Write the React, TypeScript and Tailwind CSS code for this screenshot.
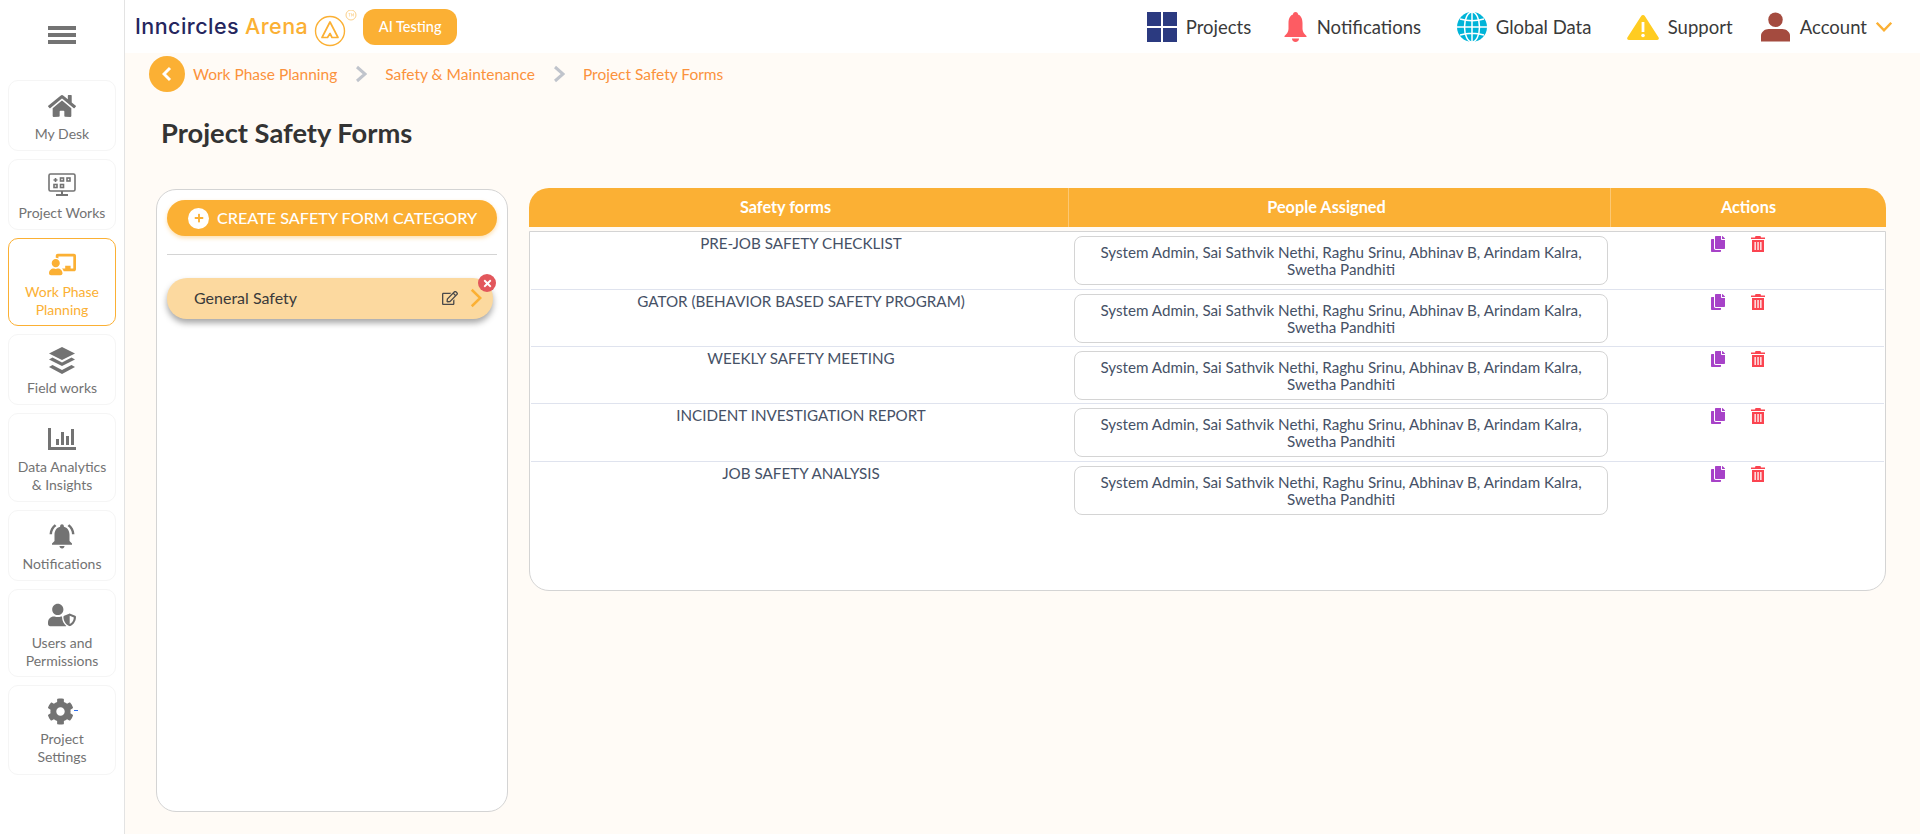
import React from "react";
import { FaHome, FaChalkboardTeacher, FaUserShield, FaCog, FaRegEdit, FaTimes, FaCopy, FaPlus } from "react-icons/fa";
import { MdNotificationsActive } from "react-icons/md";

const Grey = "#737373";

function Chevron({ w, h, color, sw, dir = "right", className }: { w: number; h: number; color: string; sw: number; dir?: "right" | "left" | "down"; className?: string }) {
  const p = sw / 2 + 0.5;
  const d =
    dir === "right"
      ? `M${p} ${p}L${w - p} ${h / 2}L${p} ${h - p}`
      : dir === "left"
        ? `M${w - p} ${p}L${p} ${h / 2}L${w - p} ${h - p}`
        : `M${p} ${p}L${w / 2} ${h - p}L${w - p} ${p}`;
  return (
    <svg width={w} height={h} viewBox={`0 0 ${w} ${h}`} fill="none" className={className}>
      <path d={d} stroke={color} strokeWidth={sw} />
    </svg>
  );
}
function ProjectWorksIcon() {
  return (
    <svg width="28" height="24" viewBox="0 0 28 24" fill="none" stroke={Grey} strokeWidth="1.6">
      <rect x="1" y="1" width="26" height="17" rx="1.5" />
      <path d="M14 18v3M8 22h12" strokeWidth="2" />
      <path d="M5.500 7h4M7.500 5v4" />
      <rect x="12.500" y="5" width="3" height="3" />
      <rect x="19" y="5" width="3" height="3" />
      <rect x="6" y="11.500" width="3" height="3" />
      <rect x="12.500" y="11.500" width="3" height="3" />
    </svg>
  );
}
function LayersIcon() {
  return (
    <svg width="26" height="27" viewBox="0 0 26 27" fill={Grey}>
      <path d="M13 0 26 6.500 13 13 0 6.500z" />
      <path d="M3.500 10.500 13 15.500l9.500-5 3.500 2-13 6.500L0 12.500z" />
      <path d="M3.500 18 13 23l9.500-5 3.500 2L13 27 0 20z" />
    </svg>
  );
}
function ChartIcon() {
  return (
    <svg width="28" height="22" viewBox="0 0 28 22" fill={Grey}>
      <path d="M0 0h3v19h25v3H0z" />
      <rect x="8" y="11" width="3" height="6" />
      <rect x="13" y="4" width="3" height="13" />
      <rect x="18" y="8" width="3" height="9" />
      <rect x="23" y="1" width="3" height="16" />
    </svg>
  );
}
function TrashIcon() {
  return (
    <svg width="14" height="16" viewBox="0 0 14 16" fill="#fb4450">
      <path d="M4.500 0h5l.5 1.500h4V3H0V1.500h4z" />
      <path fillRule="evenodd" d="M1 4h12v12H1zM3.500 6v8h1.300V6zM6.400 6v8h1.300V6zM9.200 6v8h1.300V6z" />
    </svg>
  );
}
function WindowsIcon() {
  return (
    <svg width="30" height="30" viewBox="0 0 30 30" fill="#2b3a80">
      <rect width="14" height="14" />
      <rect x="16" width="14" height="14" />
      <rect y="16" width="14" height="14" />
      <rect x="16" y="16" width="14" height="14" />
    </svg>
  );
}
function BellIcon() {
  return (
    <svg width="25" height="30" viewBox="0 0 24 30" fill="#fd5c63">
      <circle cx="12" cy="2.500" r="2.500" />
      <path d="M12 2c5 0 7 4 7 9v6c0 3 2 5 4 7v1H1v-1c2-2 4-4 4-7v-6c0-5 2-9 7-9z" />
      <path d="M8.500 26.500h7c0 2-1.500 3.500-3.500 3.500s-3.500-1.500-3.500-3.500z" />
    </svg>
  );
}
function GlobeIcon() {
  return (
    <svg width="30" height="30" viewBox="0 0 30 30" fill="none">
      <circle cx="15" cy="15" r="15" fill="#00b4d8" />
      <path d="M15 0v30M0 15h30M3 7c7 2 17 2 24 0M3 23c7-2 17-2 24 0" stroke="#fff" strokeWidth="1.500" />
      <ellipse cx="15" cy="15" rx="7.500" ry="15" stroke="#fff" strokeWidth="1.500" />
    </svg>
  );
}
function WarningIcon() {
  return (
    <svg width="32" height="26" viewBox="0 0 32 26">
      <path d="M16 1c.8 0 1.400.4 1.800 1.100l13.800 21.300c.7 1.100 0 2.600-1.400 2.600H1.800C.4 26-.3 24.500.4 23.400L14.200 2.100C14.600 1.400 15.200 1 16 1z" fill="#ffcc21" />
      <rect x="14.600" y="8" width="2.800" height="10" fill="#fff" />
      <circle cx="16" cy="21.500" r="1.800" fill="#fff" />
    </svg>
  );
}
function UserIcon() {
  return (
    <svg width="29" height="30" viewBox="0 0 30 30" fill="#a44b3f">
      <ellipse cx="15" cy="7.500" rx="7.500" ry="7.500" />
      <path d="M0 30v-6c0-4 4-7 8-7h14c4 0 8 3 8 7v6z" />
    </svg>
  );
}
function LogoMark() {
  return (
    <svg width="44" height="38" viewBox="0 0 44 38" fill="none" className="ml-[6px] mt-[4px]">
      <circle cx="16" cy="21" r="14.500" stroke="#fbb034" strokeWidth="1.400" />
      <path d="M8 27.500 16 12l8 15.500h-6l-2-4-2.500 4z" stroke="#fbb034" strokeWidth="1.700" strokeLinejoin="round" />
      <circle cx="37" cy="5" r="5" stroke="#fbd08a" strokeWidth="1" />
      <path d="M34.500 3.500h2M35.500 3.500v3M37.500 6.500v-3l1 2 1-2v3" stroke="#fbd08a" strokeWidth=".6" />
    </svg>
  );
}
function GearIcon() {
  return (
    <div className="flex items-center">
      <FaCog size={27} color={Grey} />
      <span className="mb-[2px] h-px w-[4px] bg-[#2f6fed]" />
    </div>
  );
}

const nav = [
  { label: ["My Desk"], icon: <FaHome size={28} color={Grey} />, h: "h-[71px]" },
  { label: ["Project Works"], icon: <ProjectWorksIcon />, h: "h-[71px]" },
  { label: ["Work Phase", "Planning"], icon: <FaChalkboardTeacher size={27} color="#fbb034" />, h: "h-[88px]", active: true },
  { label: ["Field works"], icon: <LayersIcon />, h: "h-[71px]" },
  { label: ["Data Analytics", "& Insights"], icon: <ChartIcon />, h: "h-[89px]" },
  { label: ["Notifications"], icon: <MdNotificationsActive size={30} color={Grey} />, h: "h-[71px]" },
  { label: ["Users and", "Permissions"], icon: <FaUserShield size={28} color={Grey} />, h: "h-[88px]" },
  { label: ["Project", "Settings"], icon: <GearIcon />, h: "h-[90px]" },
];

const topItems = [
  { icon: <WindowsIcon />, label: "Projects", w: "w-[136px]" },
  { icon: <BellIcon />, label: "Notifications", w: "w-[174px]" },
  { icon: <GlobeIcon />, label: "Global Data", w: "w-[170px]" },
  { icon: <WarningIcon />, label: "Support", w: "w-[134px]" },
];

const forms = [
  { name: "PRE-JOB SAFETY CHECKLIST", h: "h-[58px]" },
  { name: "GATOR (BEHAVIOR BASED SAFETY PROGRAM)", h: "h-[57px]" },
  { name: "WEEKLY SAFETY MEETING", h: "h-[57px]" },
  { name: "INCIDENT INVESTIGATION REPORT", h: "h-[58px]" },
  { name: "JOB SAFETY ANALYSIS", h: "h-[57px]" },
];

export default function App() {
  return (
    <div className="flex h-[834px] w-[1920px] overflow-hidden bg-[#fffbf6] font-['Lato',sans-serif]">
      <aside className="flex w-[125px] shrink-0 flex-col items-center border-r border-[#e3e3e3] bg-white">
        <div className="flex h-[80px] w-full shrink-0 items-start justify-center pt-[26px]">
          <div className="flex w-[28px] flex-col gap-[3px]">
            <span className="h-[4px] bg-[#737373]" />
            <span className="h-[4px] bg-[#737373]" />
            <span className="h-[4px] bg-[#737373]" />
          </div>
        </div>
        <div className="flex flex-col gap-[8px]">
          {nav.map((n) => (
            <div
              key={n.label[0]}
              className={`flex w-[108px] flex-col items-center rounded-[10px] border pt-[10px] text-center text-[14px] leading-[17.500px] ${n.h} ${n.active ? "border-[#fbb034] text-[#fbb034]" : "border-[#f5f5f5] text-[#737373]"}`}
            >
              <div className="flex h-[30px] items-center justify-center">{n.icon}</div>
              <div className="mt-[4px]">
                {n.label.map((l) => (
                  <div key={l}>{l}</div>
                ))}
              </div>
            </div>
          ))}
        </div>
      </aside>

      <div className="flex min-w-0 flex-1 flex-col">
        <header className="flex h-[53px] shrink-0 items-center bg-white pl-[10px]">
          <span className="font-['Inter',sans-serif] text-[21.500px] font-medium tracking-[0.45px] text-[#25265e]">Inncircles</span>
          <span className="ml-[6px] font-['Inter',sans-serif] text-[21.500px] font-medium tracking-[0.45px] text-[#fbb034]">Arena</span>
          <LogoMark />
          <div className="ml-[5px] flex h-[36px] w-[94px] items-center justify-center rounded-[12px] bg-[#fbb034] text-[14.500px] font-medium text-white">AI Testing</div>
          <div className="ml-auto flex items-center pr-[27px]">
            {topItems.map((t) => (
              <div key={t.label} className={`flex items-center gap-[9px] text-[18.500px] text-[#3a3a3a] ${t.w}`}>
                {t.icon}
                <span className="pt-[2px]">{t.label}</span>
              </div>
            ))}
            <div className="flex items-center text-[18.500px] text-[#3a3a3a]">
              <UserIcon />
              <span className="ml-[10px] mr-[8px] pt-[2px]">Account</span>
              <Chevron w={18} h={11} color="#fbb034" sw={2.500} dir="down" />
            </div>
          </div>
        </header>

        <main className="flex-1 pl-[24px] pr-[34px]">
          <div className="mt-[3px] flex h-[36px] items-center text-[15.500px] text-[#fb923c]">
            <div className="flex h-[36px] w-[36px] items-center justify-center rounded-full bg-[#fbb034]">
              <Chevron w={10} h={16} color="#fff" sw={3} dir="left" />
            </div>
            <span className="ml-[8px] pt-[1px]">Work Phase Planning</span>
            <Chevron w={12} h={18} color="#c0c4cc" sw={3} className="mx-[18px]" />
            <span className="pt-[1px]">Safety &amp; Maintenance</span>
            <Chevron w={12} h={18} color="#c0c4cc" sw={3} className="mx-[18px]" />
            <span className="pt-[1px]">Project Safety Forms</span>
          </div>
          <h1 className="ml-[12px] mt-[25px] text-[27.300px] font-bold leading-[32px] text-[#333333]">Project Safety Forms</h1>

          <div className="mt-[40px] flex items-start gap-[21px]">
            <section className="ml-[7px] h-[623px] w-[352px] shrink-0 rounded-[20px] border border-[#d4d4d4] bg-white px-[10px] pt-[10px]">
              <div className="flex h-[36px] items-center rounded-full bg-[#fbb034] pl-[21px] text-[16.200px] font-medium text-white shadow-[0_2px_4px_rgba(251,176,52,0.4)]">
                <span className="mr-[8px] flex h-[21px] w-[21px] items-center justify-center rounded-full bg-white">
                  <FaPlus size={10} color="#fbb034" />
                </span>
                CREATE SAFETY FORM CATEGORY
              </div>
              <div className="mt-[18px] h-px bg-[#d4d4d4]" />
              <div className="relative mt-[23px] flex h-[41px] w-[326px] items-center rounded-[20px] bg-[#fcd99f] pb-[2px] pl-[27px] text-[16px] text-[#3a3a3a] shadow-[0_4px_6px_rgba(0,0,0,0.35)]">
                General Safety
                <FaRegEdit size={16} color="#4a4a4a" className="ml-auto mr-[12px]" />
                <Chevron w={12} h={20} color="#fbb034" sw={2.500} className="mr-[11px]" />
                <span className="absolute -right-[3px] -top-[4px] flex h-[18px] w-[18px] items-center justify-center rounded-full bg-[#e2575c]">
                  <FaTimes size={11} color="#fff" />
                </span>
              </div>
            </section>

            <section className="-mt-[1px] flex h-[403px] w-[1357px] shrink-0 flex-col">
              <div className="grid h-[39px] shrink-0 grid-cols-[540px_542px_1fr] items-center rounded-t-[20px] bg-[#fbb034] text-center text-[16.300px] font-bold text-white">
                <div className="flex h-full items-center justify-center border-r border-[#fcc873] pr-[26px]">Safety forms</div>
                <div className="flex h-full items-center justify-center border-r border-[#fcc873] pr-[26px]">People Assigned</div>
                <div>Actions</div>
              </div>
              <div className="mt-[4px] flex-1 rounded-b-[20px] border border-[#d4d4d4] bg-white px-[1px]">
                {forms.map((f) => (
                  <div key={f.name} className={`grid grid-cols-[540px_542px_1fr] border-b border-[#dfe3ee] text-[15.200px] text-[#465166] last:border-b-0 ${f.h}`}>
                    <div className="pt-[1px] text-center leading-[20px]">{f.name}</div>
                    <div className="pl-[3px] pr-[5px] pt-[4px]">
                      <div className="h-[49px] rounded-[8px] border border-[#d4d4d4] px-[10px] pt-[7px] text-center leading-[17px]">
                        System Admin, Sai Sathvik Nethi, Raghu Srinu, Abhinav B, Arindam Kalra, Swetha Pandhiti
                      </div>
                    </div>
                    <div className="flex items-start gap-[25px] pl-[97px] pt-[4px]">
                      <FaCopy size={16} color="#a742c8" />
                      <TrashIcon />
                    </div>
                  </div>
                ))}
              </div>
            </section>
          </div>
        </main>
      </div>
    </div>
  );
}
